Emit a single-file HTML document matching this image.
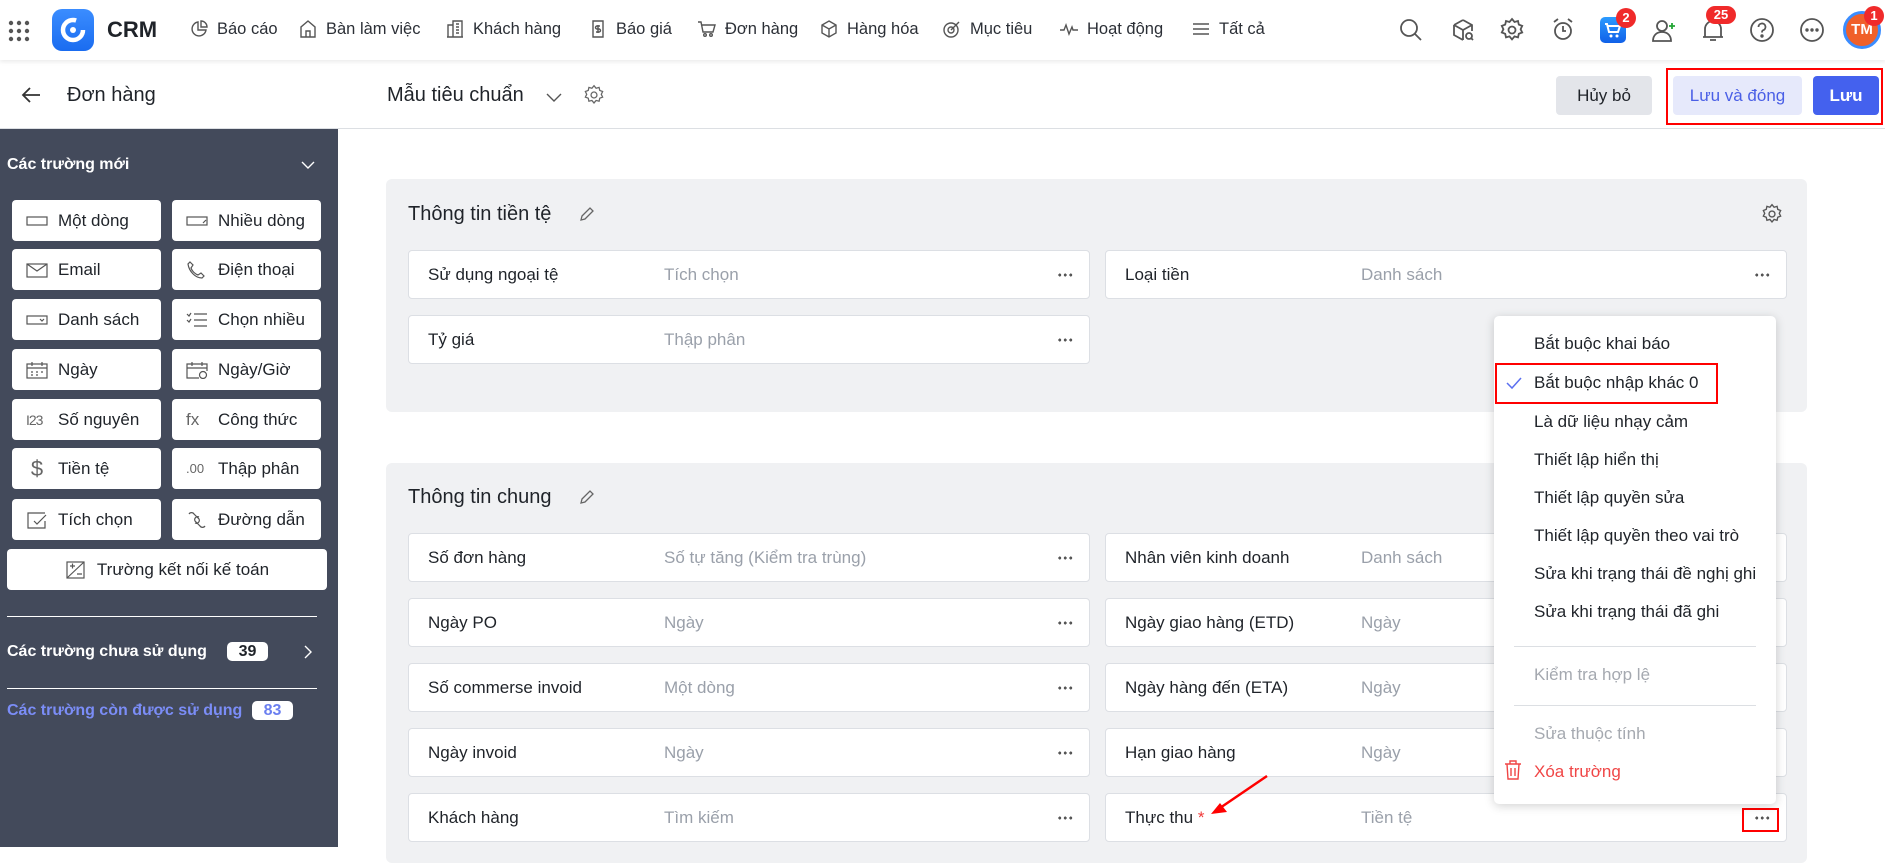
<!DOCTYPE html>
<html><head><meta charset="utf-8"><style>
*{box-sizing:border-box;margin:0;padding:0}
body{width:1885px;height:847px;overflow:hidden;font-family:"Liberation Sans",sans-serif;background:#fff;position:relative;color:#1f2329}
.a{position:absolute}
.top{left:0;top:0;width:1885px;height:60px;background:#fff;box-shadow:0 2px 4px rgba(0,0,0,.08);z-index:2}
.nav{top:19px;font-size:16.5px;color:#2b2f36;display:flex;align-items:center;gap:8px;white-space:nowrap}
.nav svg{width:20px;height:20px;fill:none;stroke:#555;stroke-width:1.4}
.ri{top:17px;width:26px;height:26px}
.ri svg{width:26px;height:26px;fill:none;stroke:#555;stroke-width:1.8}
.bar2{left:0;top:60px;width:1885px;height:69px;border-bottom:1px solid #dcdfe3;background:#fff}
.side{left:0;top:129px;width:338px;height:718px;background:#434a5b}
.sb{background:#fff;border-radius:4px;height:41px;width:149px;font-size:17px;color:#1f2329;display:flex;align-items:center;padding-left:14px;gap:10px}
.sb svg{width:22px;height:18px;fill:none;stroke:#555;stroke-width:1.2;flex:none}
.card{background:#f0f1f3;border-radius:6px}
.row{background:#fff;border:1px solid #dcdfe4;border-radius:4px;height:49px;width:682px;font-size:17px}
.row .l{position:absolute;left:19px;top:14px;color:#1f2329}
.row .t{position:absolute;left:255px;top:14px;color:#9aa0aa}
.row .d{position:absolute;right:16px;top:22px;width:16px;height:4px;background:radial-gradient(circle,#555 1.4px,transparent 1.6px) 0 0/5.5px 4px repeat-x}
.ct{font-size:20px;color:#1f2329}
.menu{left:1494px;top:316px;width:282px;height:488px;background:#fff;border-radius:5px;box-shadow:0 2px 10px rgba(0,0,0,.18);z-index:5}
.mi{position:absolute;left:40px;font-size:17px;color:#1f2329;white-space:nowrap}
.sh{font-size:16px;font-weight:bold}
</style></head><body>
<div class="a top">
 <div class="a" style="left:8px;top:20px;width:22px;height:22px">
  <svg width="22" height="22"><g fill="#555"><circle cx="3" cy="3" r="2.2"/><circle cx="11" cy="3" r="2.2"/><circle cx="19" cy="3" r="2.2"/><circle cx="3" cy="11" r="2.2"/><circle cx="11" cy="11" r="2.2"/><circle cx="19" cy="11" r="2.2"/><circle cx="3" cy="19" r="2.2"/><circle cx="11" cy="19" r="2.2"/><circle cx="19" cy="19" r="2.2"/></g></svg></div>
 <div class="a" style="left:52px;top:9px;width:42px;height:42px;border-radius:10px;background:linear-gradient(#3b8dff,#1a6cf0)">
  <svg width="42" height="42"><circle cx="21" cy="21" r="10" fill="none" stroke="#fff" stroke-width="4.5" stroke-dasharray="50 13"/><circle cx="21" cy="21" r="3" fill="#fff"/></svg></div>
 <div class="a" style="left:107px;top:17px;font-size:22px;font-weight:bold;color:#1f2329">CRM</div>
 <div class="a nav" style="left:189px"><svg viewBox="0 0 20 20"><path d="M9 3a7 7 0 1 0 8 8H9z M12 2v6h6a6 6 0 0 0-6-6z"/></svg>Báo cáo</div>
 <div class="a nav" style="left:298px"><svg viewBox="0 0 20 20"><path d="M3 18V8l7-6 7 6v10z M8 18v-6h4v6"/></svg>Bàn làm việc</div>
 <div class="a nav" style="left:445px"><svg viewBox="0 0 20 20"><path d="M3 18V6h5v12 M8 18V2h9v16z M2 18h16 M11 5h3M11 8h3M11 11h3M11 14h3"/></svg>Khách hàng</div>
 <div class="a nav" style="left:588px"><svg viewBox="0 0 20 20"><path d="M5 2h10v16H5z M10 6v8 M12 7h-3a1.5 1.5 0 0 0 0 3h2a1.5 1.5 0 0 1 0 3H8"/></svg>Báo giá</div>
 <div class="a nav" style="left:697px"><svg viewBox="0 0 20 20"><path d="M1 3h3l2 10h10l2-7H5"/><circle cx="8" cy="16" r="1.3"/><circle cx="14" cy="16" r="1.3"/></svg>Đơn hàng</div>
 <div class="a nav" style="left:819px"><svg viewBox="0 0 20 20"><path d="M10 2l7 4v8l-7 4-7-4V6z M3 6l7 4 7-4 M10 10v8"/></svg>Hàng hóa</div>
 <div class="a nav" style="left:942px"><svg viewBox="0 0 20 20"><circle cx="9" cy="11" r="7"/><circle cx="9" cy="11" r="3"/><path d="M9 11l8-8"/></svg>Mục tiêu</div>
 <div class="a nav" style="left:1059px"><svg viewBox="0 0 20 20"><path d="M1 11h4l2-5 3 9 3-7 1 3h5"/></svg>Hoạt động</div>
 <div class="a nav" style="left:1191px"><svg viewBox="0 0 20 20"><path d="M2 5h16M2 10h16M2 15h16"/></svg>Tất cả</div>

 <div class="a ri" style="left:1398px"><svg viewBox="0 0 26 26"><circle cx="11" cy="11" r="8"/><path d="M17 17l6 6"/></svg></div>
 <div class="a ri" style="left:1450px"><svg viewBox="0 0 26 26"><path d="M13 3l9 5v6 M4 8l9-5 M4 8v10l9 5 M4 8l9 5 9-5 M13 13v10"/><circle cx="19" cy="19" r="3"/><path d="M21 21l2 2"/></svg></div>
 <div class="a ri" style="left:1499px"><svg viewBox="0 0 26 26"><circle cx="13" cy="13" r="3.5"/><path d="M13 2l2.5 3 3.5-1 .8 3.6 3.4 1.3-1.6 3.3 1.6 3.3-3.4 1.3-.8 3.6-3.5-1-2.5 3-2.5-3-3.5 1-.8-3.6-3.4-1.3 1.6-3.3-1.6-3.3 3.4-1.3.8-3.6 3.5 1z"/></svg></div>
 <div class="a ri" style="left:1550px"><svg viewBox="0 0 26 26"><circle cx="13" cy="14" r="8"/><path d="M13 9v5h3 M4 5l4-3 M22 5l-4-3"/></svg></div>
 <div class="a" style="left:1600px;top:17px;width:26px;height:26px;border-radius:5px;background:linear-gradient(#2c9bff,#1060e8)"><svg width="26" height="26"><path d="M5 7h2l2 8h9l2-6H8" fill="none" stroke="#fff" stroke-width="2"/><circle cx="11" cy="19" r="1.5" fill="#fff"/><circle cx="17" cy="19" r="1.5" fill="#fff"/></svg></div>
 <div class="a" style="left:1616px;top:8px;width:20px;height:20px;border-radius:10px;background:#f02a2a;color:#fff;font-size:13px;font-weight:bold;text-align:center;line-height:20px">2</div>
 <div class="a ri" style="left:1651px"><svg viewBox="0 0 26 26"><circle cx="11" cy="9" r="5"/><path d="M2 24c0-6 4-9 9-9s9 3 9 9z"/><path d="M21 6v6M18 9h6" stroke="#23a636"/></svg></div>
 <div class="a ri" style="left:1700px"><svg viewBox="0 0 26 26"><path d="M5 20V12a8 8 0 0 1 16 0v8z M3 20h20 M10 23h6"/></svg></div>
 <div class="a" style="left:1706px;top:6px;width:30px;height:18px;border-radius:9px;background:#f02a2a;color:#fff;font-size:13px;font-weight:bold;text-align:center;line-height:18px">25</div>
 <div class="a ri" style="left:1749px"><svg viewBox="0 0 26 26"><circle cx="13" cy="13" r="11"/><path d="M9.5 10a3.5 3.5 0 1 1 4.5 3.3c-1 .4-1 1-1 2.2"/><circle cx="13" cy="19" r=".8" fill="#555"/></svg></div>
 <div class="a ri" style="left:1799px"><svg viewBox="0 0 26 26"><circle cx="13" cy="13" r="11"/><circle cx="8" cy="13" r=".8" fill="#555"/><circle cx="13" cy="13" r=".8" fill="#555"/><circle cx="18" cy="13" r=".8" fill="#555"/></svg></div>
 <div class="a" style="left:1843px;top:11px;width:38px;height:38px;border-radius:19px;border:3px solid #3b8dff;background:#f0602a;color:#fff;font-size:15px;font-weight:bold;text-align:center;line-height:32px">TM</div>
 <div class="a" style="left:1864px;top:6px;width:20px;height:20px;border-radius:10px;background:#f02a2a;color:#fff;font-size:13px;font-weight:bold;text-align:center;line-height:20px">1</div>
</div>

<div class="a bar2">
 <svg class="a" style="left:20px;top:25px" width="22" height="20"><path d="M20 10H3M10 3L3 10l7 7" fill="none" stroke="#333" stroke-width="1.8"/></svg>
 <div class="a" style="left:67px;top:24px;font-size:20px">Đơn hàng</div>
 <div class="a" style="left:387px;top:24px;font-size:20px">Mẫu tiêu chuẩn</div>
 <svg class="a" style="left:545px;top:31px" width="18" height="12"><path d="M2 3l7 7 7-7" fill="none" stroke="#555" stroke-width="1.4"/></svg>
 <svg class="a" style="left:583px;top:24px" width="22" height="22" viewBox="0 0 26 26"><circle cx="13" cy="13" r="3.5" fill="none" stroke="#666" stroke-width="1.5"/><path d="M13 2l2.5 3 3.5-1 .8 3.6 3.4 1.3-1.6 3.3 1.6 3.3-3.4 1.3-.8 3.6-3.5-1-2.5 3-2.5-3-3.5 1-.8-3.6-3.4-1.3 1.6-3.3-1.6-3.3 3.4-1.3.8-3.6 3.5 1z" fill="none" stroke="#666" stroke-width="1.5"/></svg>
 <div class="a" style="left:1556px;top:16px;width:96px;height:39px;background:#e3e5ea;border-radius:4px;font-size:17px;text-align:center;line-height:39px">Hủy bỏ</div>
 <div class="a" style="left:1666px;top:8px;width:217px;height:57px;border:2px solid #f00"></div>
 <div class="a" style="left:1673px;top:16px;width:129px;height:39px;background:#e6e9fb;border-radius:4px;font-size:17px;color:#4a5fe6;text-align:center;line-height:39px">Lưu và đóng</div>
 <div class="a" style="left:1813px;top:16px;width:66px;height:39px;background:#4461ee;border-radius:4px;font-size:17px;color:#fff;text-align:center;line-height:39px;font-weight:bold">Lưu</div>
</div>

<div class="a side">
 <div class="a sh" style="left:7px;top:27px;color:#fff">Các trường mới</div>
 <svg class="a" style="left:300px;top:31px" width="16" height="10"><path d="M2 2l6 6 6-6" fill="none" stroke="#fff" stroke-width="1.4"/></svg>
 <div class="a sb" style="left:12px;top:71px"><svg viewBox="0 0 22 18"><rect x="1" y="5" width="20" height="8"/></svg>Một dòng</div>
 <div class="a sb" style="left:172px;top:71px"><svg viewBox="0 0 22 18"><rect x="1" y="5" width="20" height="8"/><path d="M17 11l3-3"/></svg>Nhiều dòng</div>
 <div class="a sb" style="left:12px;top:120px"><svg viewBox="0 0 22 18"><rect x="1" y="3" width="20" height="13"/><path d="M1 3l10 7 10-7"/></svg>Email</div>
 <div class="a sb" style="left:172px;top:120px"><svg viewBox="0 0 22 18"><path d="M4 1l3 3-2 3c1 3 4 6 7 7l3-2 3 3-2 2C9 17 3 10 2 3z"/></svg>Điện thoại</div>
 <div class="a sb" style="left:12px;top:170px"><svg viewBox="0 0 22 18"><rect x="1" y="5" width="20" height="8"/><path d="M14 8l2 2 2-2"/></svg>Danh sách</div>
 <div class="a sb" style="left:172px;top:170px"><svg viewBox="0 0 22 18"><path d="M8 3h13M8 9h13M8 15h13M1 3l2 2 2-3M1 9l2 2 2-3"/></svg>Chọn nhiều</div>
 <div class="a sb" style="left:12px;top:220px"><svg viewBox="0 0 22 18"><rect x="1" y="3" width="20" height="14"/><path d="M1 7h20M6 1v4M16 1v4M5 11h2M10 11h2M15 11h2M5 14h2M10 14h2"/></svg>Ngày</div>
 <div class="a sb" style="left:172px;top:220px"><svg viewBox="0 0 22 18"><path d="M13 17H1V3h20v7M1 7h20M6 1v4M16 1v4"/><circle cx="17" cy="14" r="3.5"/></svg>Ngày/Giờ</div>
 <div class="a sb" style="left:12px;top:270px;font-size:17px"><span style="font-size:14px;color:#666;width:22px;letter-spacing:-1px">I23</span>Số nguyên</div>
 <div class="a sb" style="left:172px;top:270px"><span style="font-size:17px;color:#666;width:22px">fx</span>Công thức</div>
 <div class="a sb" style="left:12px;top:319px"><span style="font-size:22px;color:#666;width:22px;text-align:center">$</span>Tiền tệ</div>
 <div class="a sb" style="left:172px;top:319px"><span style="font-size:13px;color:#666;width:22px">.00</span>Thập phân</div>
 <div class="a sb" style="left:12px;top:370px"><svg viewBox="0 0 22 18"><path d="M19 10v7H2V2h17M8 10l3 3 9-9"/></svg>Tích chọn</div>
 <div class="a sb" style="left:172px;top:370px"><svg viewBox="0 0 22 18"><path d="M3 3a3 3 0 0 1 5 0l5 5a3 3 0 0 1-4 4M19 15a3 3 0 0 1-5 0L9 10a3 3 0 0 1 4-4"/></svg>Đường dẫn</div>
 <div class="a sb" style="left:7px;top:420px;width:320px;justify-content:center;padding-left:0"><svg viewBox="0 0 22 18"><rect x="2" y="1" width="17" height="16"/><path d="M2 17L19 1M5 5h5M7.5 2.5v5M12 13h5"/></svg>Trường kết nối kế toán</div>
 <div class="a" style="left:7px;top:487px;width:310px;height:1px;background:#fff"></div>
 <div class="a sh" style="left:7px;top:514px;color:#fff">Các trường chưa sử dụng</div>
 <div class="a" style="left:227px;top:513px;width:41px;height:19px;border-radius:5px;background:#fff;font-size:16px;font-weight:bold;text-align:center;line-height:19px">39</div>
 <svg class="a" style="left:303px;top:515px" width="10" height="16"><path d="M2 2l6 6-6 6" fill="none" stroke="#fff" stroke-width="1.4"/></svg>
 <div class="a" style="left:7px;top:559px;width:310px;height:1px;background:#fff"></div>
 <div class="a sh" style="left:7px;top:573px;color:#7b8df7">Các trường còn được sử dụng</div>
 <div class="a" style="left:252px;top:572px;width:41px;height:19px;border-radius:5px;background:#fff;font-size:16px;font-weight:bold;color:#6b7ff0;text-align:center;line-height:19px">83</div>
</div>

<div class="a card" style="left:386px;top:179px;width:1421px;height:233px"></div>
<div class="a ct" style="left:408px;top:203px">Thông tin tiền tệ</div>
<svg class="a" style="left:578px;top:205px" width="18" height="18"><path d="M3 15l1-4 8-8 3 3-8 8z" fill="none" stroke="#666" stroke-width="1.3"/></svg>
<svg class="a" style="left:1761px;top:203px" width="22" height="22" viewBox="0 0 26 26"><circle cx="13" cy="13" r="3.5" fill="none" stroke="#555" stroke-width="1.6"/><path d="M13 2l2.5 3 3.5-1 .8 3.6 3.4 1.3-1.6 3.3 1.6 3.3-3.4 1.3-.8 3.6-3.5-1-2.5 3-2.5-3-3.5 1-.8-3.6-3.4-1.3 1.6-3.3-1.6-3.3 3.4-1.3.8-3.6 3.5 1z" fill="none" stroke="#555" stroke-width="1.6"/></svg>
<div class="a row" style="left:408px;top:250px"><span class="l">Sử dụng ngoại tệ</span><span class="t">Tích chọn</span><span class="d"></span></div>
<div class="a row" style="left:1105px;top:250px"><span class="l">Loại tiền</span><span class="t">Danh sách</span><span class="d"></span></div>
<div class="a row" style="left:408px;top:315px"><span class="l">Tỷ giá</span><span class="t">Thập phân</span><span class="d"></span></div>

<div class="a card" style="left:386px;top:463px;width:1421px;height:400px"></div>
<div class="a ct" style="left:408px;top:486px">Thông tin chung</div>
<svg class="a" style="left:578px;top:488px" width="18" height="18"><path d="M3 15l1-4 8-8 3 3-8 8z" fill="none" stroke="#666" stroke-width="1.3"/></svg>
<div class="a row" style="left:408px;top:533px"><span class="l">Số đơn hàng</span><span class="t">Số tự tăng (Kiểm tra trùng)</span><span class="d"></span></div>
<div class="a row" style="left:1105px;top:533px"><span class="l">Nhân viên kinh doanh</span><span class="t">Danh sách</span><span class="d"></span></div>
<div class="a row" style="left:408px;top:598px"><span class="l">Ngày PO</span><span class="t">Ngày</span><span class="d"></span></div>
<div class="a row" style="left:1105px;top:598px"><span class="l">Ngày giao hàng (ETD)</span><span class="t">Ngày</span><span class="d"></span></div>
<div class="a row" style="left:408px;top:663px"><span class="l">Số commerse invoid</span><span class="t">Một dòng</span><span class="d"></span></div>
<div class="a row" style="left:1105px;top:663px"><span class="l">Ngày hàng đến (ETA)</span><span class="t">Ngày</span><span class="d"></span></div>
<div class="a row" style="left:408px;top:728px"><span class="l">Ngày invoid</span><span class="t">Ngày</span><span class="d"></span></div>
<div class="a row" style="left:1105px;top:728px"><span class="l">Hạn giao hàng</span><span class="t">Ngày</span><span class="d"></span></div>
<div class="a row" style="left:408px;top:793px"><span class="l">Khách hàng</span><span class="t">Tìm kiếm</span><span class="d"></span></div>
<div class="a row" style="left:1105px;top:793px"><span class="l">Thực thu <span style="color:#f03a3a">*</span></span><span class="t">Tiền tệ</span><span class="d"></span></div>
<div class="a" style="left:1742px;top:808px;width:37px;height:24px;border:2px solid #f00"></div>
<svg class="a" style="left:1205px;top:770px;z-index:6" width="70" height="50"><path d="M62 6L12 40" stroke="#f00" stroke-width="2.5"/><path d="M6 44l16-2-7-9z" fill="#f00"/></svg>

<div class="a menu">
 <div class="mi" style="top:18px">Bắt buộc khai báo</div>
 <div class="a" style="left:1px;top:47px;width:223px;height:41px;border:2px solid #f00"></div>
 <svg class="a" style="left:11px;top:60px" width="18" height="14"><path d="M2 7l5 5 9-10" fill="none" stroke="#5b6ff0" stroke-width="1.5"/></svg>
 <div class="mi" style="top:57px">Bắt buộc nhập khác 0</div>
 <div class="mi" style="top:96px">Là dữ liệu nhạy cảm</div>
 <div class="mi" style="top:134px">Thiết lập hiển thị</div>
 <div class="mi" style="top:172px">Thiết lập quyền sửa</div>
 <div class="mi" style="top:210px">Thiết lập quyền theo vai trò</div>
 <div class="mi" style="top:248px">Sửa khi trạng thái đề nghị ghi</div>
 <div class="mi" style="top:286px">Sửa khi trạng thái đã ghi</div>
 <div class="a" style="left:20px;top:330px;width:242px;height:1px;background:#dcdfe3"></div>
 <div class="mi" style="top:349px;color:#a5a9b0">Kiểm tra hợp lệ</div>
 <div class="a" style="left:20px;top:389px;width:242px;height:1px;background:#dcdfe3"></div>
 <div class="mi" style="top:408px;color:#a5a9b0">Sửa thuộc tính</div>
 <svg class="a" style="left:10px;top:444px" width="18" height="20"><path d="M1 4h16M6 4V1h6v3M3 4l1 15h10l1-15M7 8v8M11 8v8" fill="none" stroke="#f04646" stroke-width="1.4"/></svg>
 <div class="mi" style="top:446px;color:#f04646">Xóa trường</div>
</div>
</body></html>
